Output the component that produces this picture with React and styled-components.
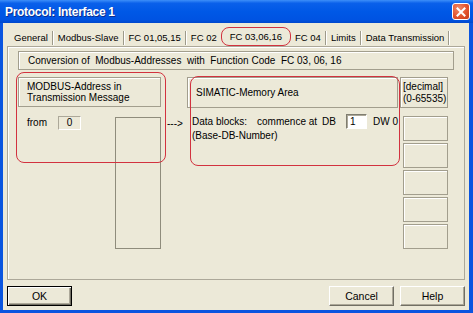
import React from "react";
import styled, { createGlobalStyle } from "styled-components";

const Global = createGlobalStyle`
  html, body { margin: 0; padding: 0; background: #ECE9D8; }
  body { font-family: "Liberation Sans", Arial, sans-serif; }
`;

const Window = styled.div`
  width: 473px;
  height: 313px;
  display: flex;
  flex-direction: column;
  overflow: hidden;
`;

const TitleBar = styled.div`
  height: 23px;
  flex: none;
  display: flex;
  align-items: center;
  justify-content: space-between;
  padding: 0 3px 0 5px;
  background: linear-gradient(to bottom, #3d8ff9 0%, #0a60ea 14%, #0058e6 50%, #0053e2 85%, #0048cc 100%);
`;

const Title = styled.span`
  color: #fff;
  font-weight: bold;
  font-size: 12px;
  letter-spacing: -0.3px;
  text-shadow: 1px 1px 0 #0b2f8f;
`;

const CloseButton = styled.div`
  width: 18px;
  height: 17px;
  box-sizing: border-box;
  border: 1px solid #fff;
  border-radius: 3px;
  background: radial-gradient(circle at 35% 30%, #f08a6a 0%, #e2542e 55%, #c63a18 100%);
  display: flex;
  align-items: center;
  justify-content: center;
`;

const Client = styled.div`
  flex: 1;
  display: flex;
  flex-direction: column;
  border-style: solid;
  border-color: #0a55e0;
  border-width: 0 4px 3px 3px;
  background: #ECE9D8;
  padding: 4px 0 4px 0;
  font-size: 10px;
  color: #000;
`;

const TabRow = styled.div`
  height: 19px;
  flex: none;
  display: flex;
  padding-left: 7px;
  font-size: 9.5px;
`;

const Tab = styled.div`
  box-sizing: border-box;
  height: 19px;
  padding: ${(p) => (p.$active ? "2px 8px 0" : "4px 4px 0")};
  line-height: 14px;
  white-space: nowrap;
  border: ${(p) => (p.$active ? "1.5px solid #d2323f" : "none")};
  border-radius: 8px;
`;

const TabSep = styled.div`
  width: 2px;
  height: 14px;
  margin-top: 4px;
  background: linear-gradient(to right, #9d9a8a 50%, #fff 50%);
`;

const Panel = styled.div`
  position: relative;
  height: 234px;
  box-sizing: border-box;
  margin: 0 4px;
  border: 1px solid #aca899;
  box-shadow: inset 1px 1px 0 #fff;
  padding: 4px 10px 0 10px;
  display: flex;
  flex-direction: column;
  gap: 7px;
`;

const EtchedBox = styled.div`
  box-sizing: border-box;
  height: ${(p) => p.$h}px;
  border: 1px solid #a29e8d;
  box-shadow: inset 1px 1px 0 #fff;
  padding-left: ${(p) => p.$pad}px;
  display: flex;
  flex-direction: column;
  justify-content: center;
  line-height: ${(p) => p.$lh || 11}px;
  white-space: pre;
`;

const MainArea = styled.div`
  display: flex;
  align-items: flex-start;
`;

const Column = styled.div`
  width: ${(p) => p.$w}px;
  margin-left: ${(p) => p.$ml || 0}px;
  display: flex;
  flex-direction: column;
`;

const FromRow = styled.div`
  display: flex;
  align-items: flex-start;
  padding-top: 9px;
`;

const Label = styled.div`
  width: 40px;
  box-sizing: border-box;
  padding-left: 9px;
  line-height: 14px;
`;

const ValueBox = styled.div`
  width: 23px;
  height: 14px;
  box-sizing: border-box;
  border: 1px solid;
  border-color: #aca899 #fff #fff #aca899;
  text-align: center;
  line-height: 12px;
`;

const TallBox = styled.div`
  width: 46px;
  height: 132px;
  margin: 1px 0 0 auto;
  box-sizing: border-box;
  border: 1px solid #8f8c7c;
`;

const Arrow = styled.div`
  width: 26px;
  box-sizing: border-box;
  padding: 41px 0 0 6px;
  line-height: 12px;
  white-space: pre;
`;

const DataRow = styled.div`
  display: flex;
  align-items: center;
  height: 15px;
  margin: 6px 0 0 5px;
  white-space: pre;
`;

const Note = styled.div`
  margin-left: 5px;
  line-height: 14px;
`;

const Word = styled.span`
  margin-left: ${(p) => p.$ml || 0}px;
`;

const Input = styled.div`
  width: 30px;
  height: 15px;
  box-sizing: border-box;
  margin: 0 6px 0 10px;
  background: #fff;
  border: 1px solid;
  border-color: #7f7d70 #fff #fff #7f7d70;
  box-shadow: inset 1px 1px 0 #aca899;
  padding-left: 3px;
  line-height: 13px;
`;

const SlotList = styled.div`
  display: flex;
  flex-direction: column;
  gap: 2px;
  padding: 8px 0 0 3px;
`;

const Slot = styled.div`
  width: 45px;
  height: 25px;
  box-sizing: border-box;
  border: 1px solid #a29e8d;
  box-shadow: inset 1px 1px 0 #fff;
`;

const Marker = styled.div`
  position: absolute;
  left: ${(p) => p.$x}px;
  top: ${(p) => p.$y}px;
  width: ${(p) => p.$w}px;
  height: ${(p) => p.$h}px;
  box-sizing: border-box;
  border: 1.5px solid #d2323f;
  border-radius: 8px;
  pointer-events: none;
`;

const ButtonRow = styled.div`
  display: flex;
  align-items: center;
  margin-top: 6px;
  padding: 0 4px;
  gap: 6px;
`;

const Button = styled.div`
  width: 65px;
  height: 20px;
  box-sizing: border-box;
  display: flex;
  align-items: center;
  justify-content: center;
  margin-left: ${(p) => (p.$push ? "auto" : "0")};
  border: 1px solid;
  border-color: ${(p) => (p.$default ? "#000" : "#fff #716f64 #716f64 #fff")};
  box-shadow: ${(p) =>
    p.$default
      ? "inset 1px 1px 0 #fff, inset -1px -1px 0 #716f64, inset -2px -2px 0 #aca899"
      : "inset -1px -1px 0 #aca899"};
  font-size: 10.5px;
`;

const tabs = ["General", "Modbus-Slave", "FC 01,05,15", "FC 02", "FC 03,06,16", "FC 04", "Limits", "Data Transmission"];
const activeTab = 4;

export default function App() {
  const items = [];
  tabs.forEach((t, i) => {
    items.push(<Tab key={t} $active={i === activeTab}>{t}</Tab>);
    if (i !== activeTab && i + 1 !== activeTab) items.push(<TabSep key={t + "-sep"} />);
  });

  return (
    <>
      <Global />
      <Window>
        <TitleBar>
          <Title>Protocol: Interface 1</Title>
          <CloseButton>
            <svg width="10" height="10" viewBox="0 0 10 10">
              <path d="M1.5 1.5 L8.5 8.5 M8.5 1.5 L1.5 8.5" stroke="#fff" strokeWidth="2" strokeLinecap="square" />
            </svg>
          </CloseButton>
        </TitleBar>
        <Client>
          <TabRow>{items}</TabRow>
          <Panel>
            <EtchedBox $h={19} $pad={9}>Conversion of  Modbus-Addresses  with  Function Code  FC 03, 06, 16</EtchedBox>
            <MainArea>
              <Column $w={143}>
                <EtchedBox $h={30} $pad={8}>{"MODBUS-Address in\nTransmission Message"}</EtchedBox>
                <FromRow>
                  <Label>from</Label>
                  <ValueBox>0</ValueBox>
                  <TallBox />
                </FromRow>
              </Column>
              <Arrow>---&gt;</Arrow>
              <Column $w={211}>
                <EtchedBox $h={31} $pad={8}>SIMATIC-Memory Area</EtchedBox>
                <DataRow>
                  <Word>Data blocks:</Word>
                  <Word $ml={10}>commence at</Word>
                  <Word $ml={5}>DB</Word>
                  <Input>1</Input>
                  <Word>DW 0</Word>
                </DataRow>
                <Note>(Base-DB-Number)</Note>
              </Column>
              <Column $w={48} $ml={2}>
                <EtchedBox $h={31} $pad={2} $lh={12}>{"[decimal]\n(0-65535)"}</EtchedBox>
                <SlotList>
                  {[0, 1, 2, 3, 4].map((n) => (
                    <Slot key={n} />
                  ))}
                </SlotList>
              </Column>
            </MainArea>
            <Marker $x={8} $y={25} $w={150} $h={91} />
            <Marker $x={182} $y={29} $w={210} $h={90} />
          </Panel>
          <ButtonRow>
            <Button $default>OK</Button>
            <Button $push>Cancel</Button>
            <Button>Help</Button>
          </ButtonRow>
        </Client>
      </Window>
    </>
  );
}
